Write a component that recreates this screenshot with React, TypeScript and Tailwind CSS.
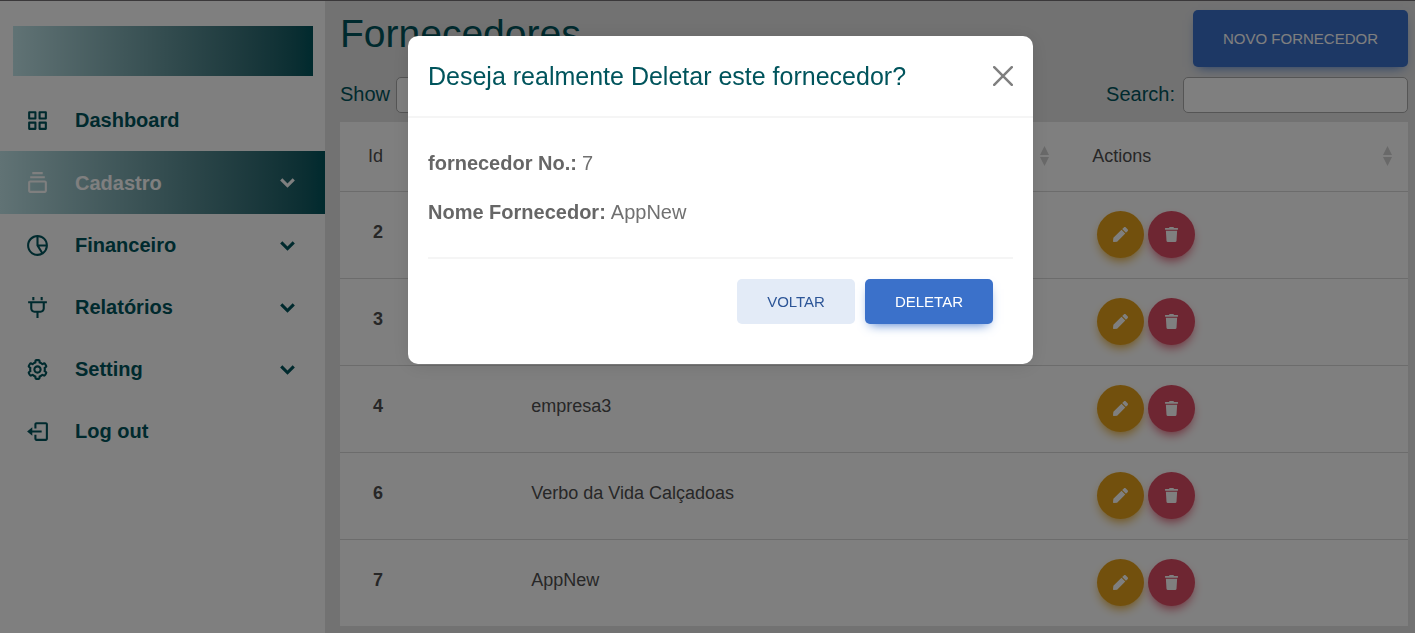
import React from "react";
import {
  BiGridAlt,
  BiCollection,
  BiPieChartAlt2,
  BiPlug,
  BiCog,
  BiLogOut,
  BiSolidChevronDown,
} from "react-icons/bi";
import { FaPen, FaTrash } from "react-icons/fa";

const menu = [
  { label: "Dashboard", Icon: BiGridAlt, expandable: false, active: false },
  { label: "Cadastro", Icon: BiCollection, expandable: true, active: true },
  { label: "Financeiro", Icon: BiPieChartAlt2, expandable: true, active: false },
  { label: "Relatórios", Icon: BiPlug, expandable: true, active: false },
  { label: "Setting", Icon: BiCog, expandable: true, active: false },
  { label: "Log out", Icon: BiLogOut, expandable: false, active: false },
];

const suppliers = [
  { id: 2, name: "" },
  { id: 3, name: "" },
  { id: 4, name: "empresa3" },
  { id: 6, name: "Verbo da Vida Calçadoas" },
  { id: 7, name: "AppNew" },
];

function SortArrows() {
  return (
    <svg width="9" height="20" viewBox="0 0 9 20" className="shrink-0 fill-[#d2d2d2]" aria-hidden="true">
      <path d="M4.500 0 9 9H0z" />
      <path d="M0 11h9l-4.500 9z" />
    </svg>
  );
}

function Sidebar() {
  return (
    <aside className="w-[325px] shrink-0 bg-white pt-[25px]">
      <div className="mr-3 ml-[13px] h-[50px] bg-linear-to-r from-[#c2e6ea] to-[#00545c]" />
      <nav className="mt-[13px]">
        <ul>
          {menu.map(({ label, Icon, expandable, active }) => (
            <li key={label}>
              <a
                href="#"
                className={
                  active
                    ? "flex h-[63px] items-center bg-linear-to-r from-[#c2e6ea] to-[#00545c] text-white"
                    : "flex h-[62px] items-center text-[#00545c]"
                }
              >
                <span className="flex w-[75px] justify-center">
                  <Icon size={25} />
                </span>
                <span className="flex-1 text-xl font-bold">{label}</span>
                {expandable && <BiSolidChevronDown size={25} className="mr-[25px]" />}
              </a>
            </li>
          ))}
        </ul>
      </nav>
    </aside>
  );
}

function SupplierTable() {
  return (
    <table className="mt-[9px] w-full table-fixed bg-white text-left text-[18px] text-[#4f4f4f]">
      <colgroup>
        <col className="w-[15%]" />
        <col className="w-[53%]" />
        <col className="w-[32%]" />
      </colgroup>
      <thead>
        <tr className="h-[69px] border-b border-[#d8d8d8]">
          <th className="pl-7 font-normal">Id</th>
          <th aria-label="Nome" className="pr-[17px] pl-[31px] font-normal">
            <div className="flex justify-end">
              <SortArrows />
            </div>
          </th>
          <th className="pr-4 pl-[26px] font-normal">
            <div className="flex items-center justify-between">
              Actions
              <SortArrows />
            </div>
          </th>
        </tr>
      </thead>
      <tbody>
        {suppliers.map((s) => (
          <tr key={s.id} className="h-[87px] border-b border-[#d8d8d8] last:border-b-0">
            <th scope="row" className="pb-1 pl-[33px] font-bold">{s.id}</th>
            <td className="pb-1 pl-[31px]">{s.name}</td>
            <td className="pl-[31px]">
              <div className="flex gap-1">
                <button
                  type="button"
                  aria-label="Editar"
                  className="flex size-[47px] items-center justify-center rounded-full bg-[#e4a11b] text-white shadow-[0_5px_11px_-3px_#e4a11b]"
                >
                  <FaPen size={15} />
                </button>
                <button
                  type="button"
                  aria-label="Deletar"
                  className="flex size-[47px] items-center justify-center rounded-full bg-[#dc4c64] text-white shadow-[0_5px_11px_-3px_#dc4c64]"
                >
                  <FaTrash size={15} />
                </button>
              </div>
            </td>
          </tr>
        ))}
      </tbody>
    </table>
  );
}

function DeleteDialog() {
  return (
    <div className="fixed inset-x-0 top-px bottom-0 flex items-start justify-center bg-black/50 pt-[35px]">
      <div
        role="dialog"
        aria-modal="true"
        aria-labelledby="dialog-title"
        className="ml-[26px] w-[625px] rounded-[10px] bg-white shadow-[0_2px_19px_rgba(0,0,0,0.1)]"
      >
        <div className="flex items-center justify-between border-b-2 border-[#f5f5f5] p-5">
          <h2 id="dialog-title" className="text-[25px] leading-10 text-[#00545c]">
            Deseja realmente Deletar este fornecedor?
          </h2>
          <button type="button" aria-label="Fechar" className="text-[#7f7f7f]">
            <svg width="20" height="20" viewBox="0 0 20 20" fill="none" stroke="currentColor" strokeWidth="2.500" strokeLinecap="round">
              <path d="M1.200 1.200 18.800 18.800M18.800 1.200 1.200 18.800" />
            </svg>
          </button>
        </div>
        <div className="px-5 pt-[30px] pb-10">
          <dl className="space-y-[19px] text-xl leading-[30px] text-[#666]">
            <div className="flex gap-[5px]">
              <dt className="font-bold">fornecedor No.:</dt>
              <dd className="text-[#707070]">7</dd>
            </div>
            <div className="flex gap-[5px]">
              <dt className="font-bold">Nome Fornecedor:</dt>
              <dd className="text-[#707070]">AppNew</dd>
            </div>
          </dl>
          <div className="mt-[30px] flex justify-end gap-[10px] border-t-2 border-[#f5f5f5] pt-5 pr-5">
            <button type="button" className="h-[45px] rounded-[5px] bg-[#e3ebf7] px-[30px] pt-[2px] text-[15px] text-[#2c5597]">
              VOLTAR
            </button>
            <button
              type="button"
              className="h-[45px] rounded-[5px] bg-[#3b71ca] px-[30px] pt-[2px] text-[15px] text-white shadow-[0_5px_11px_-5px_#3b71ca]"
            >
              DELETAR
            </button>
          </div>
        </div>
      </div>
    </div>
  );
}

export default function App() {
  return (
    <div className="flex min-h-screen border-t border-[#3a383a] bg-[#e4e4e4] font-['Liberation_Sans',Arial,sans-serif]">
      <Sidebar />
      <main className="min-w-0 flex-1 pt-[9px] pr-[7px] pb-[6px] pl-[15px]">
        <header className="flex items-start justify-between">
          <h1 className="text-[39px] leading-[48px] text-[#00545c]">Fornecedores</h1>
          <button
            type="button"
            className="h-[57px] rounded-[5px] bg-[#3b71ca] px-[30px] pt-[2px] text-[15px] text-white shadow-[0_5px_11px_-5px_#3b71ca]"
          >
            NOVO FORNECEDOR
          </button>
        </header>
        <div className="mt-[10px] flex items-center justify-between text-xl text-[#00545c]">
          <label className="flex items-center gap-[6px]">
            <span className="pb-[2px]">Show</span>
            <select className="h-9 w-20 rounded-[5px] border border-[#aaa] bg-white px-3">
              <option>10</option>
            </select>
          </label>
          <label className="flex items-center gap-2">
            <span className="pb-[2px]">Search:</span>
            <input type="search" className="h-9 w-[225px] rounded-[5px] border border-[#aaa] bg-white px-2" />
          </label>
        </div>
        <SupplierTable />
      </main>
      <DeleteDialog />
    </div>
  );
}
